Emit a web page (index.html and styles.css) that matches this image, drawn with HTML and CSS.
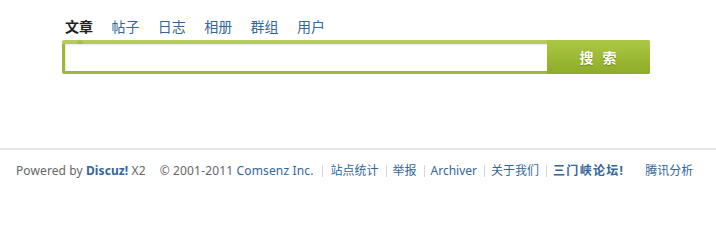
FILE: index.html
```html
<!DOCTYPE html>
<html>
<head>
<meta charset="utf-8">
<link rel="stylesheet" href="styles.css">
</head>
<body>
<div class="search-wrap">
  <ul class="tabs">
    <li class="tab active">文章</li>
    <li class="tab">帖子</li>
    <li class="tab">日志</li>
    <li class="tab">相册</li>
    <li class="tab">群组</li>
    <li class="tab">用户</li>
  </ul>
  <div class="search-box">
    <div class="input"></div>
    <div class="btn">搜 索</div>
  </div>
</div>
<div class="footer">
  <span class="grey">Powered by <b class="dz">Discuz!</b> X2</span>
  <span class="copy">© 2001-2011 <span class="link">Comsenz Inc.</span></span>
  <i class="sep first"></i><span class="link">站点统计</span>
  <i class="sep"></i><span class="link">举报</span>
  <i class="sep"></i><span class="link">Archiver</span>
  <i class="sep"></i><span class="link">关于我们</span>
  <i class="sep"></i><b class="link strong">三门峡论坛!</b>
  <span class="link last">腾讯分析</span>
</div>
</body>
</html>
```

FILE: styles.css
```css
html, body {
  margin: 0;
  padding: 0;
  background: #fff;
  font-family: "Noto Sans", "Noto Sans CJK SC", sans-serif;
  font-size: 12px;
  color: #333;
}
.search-wrap {
  margin-left: 62px;
  width: 588px;
  padding-top: 16px;
  height: 132px;
}
.tabs {
  list-style: none;
  margin: 0;
  padding: 0 0 0 3px;
  display: flex;
  gap: 18.4px;
  height: 24px;
}
.tab {
  font-family: "Noto Sans CJK SC", sans-serif;
  font-size: 14px;
  line-height: 20px;
  color: #336699;
  position: relative;
}
.tab.active {
  color: #222;
  font-weight: bold;
}
.tab.active::after {
  content: "";
  position: absolute;
  left: 11px;
  bottom: -4px;
  border-left: 4px solid transparent;
  border-right: 4px solid transparent;
  border-bottom: 4px solid #a3bf3b;
}
.search-box {
  display: flex;
  height: 34px;
  border-radius: 2px;
  background: #9db835;
  box-sizing: border-box;
  border-top: 4px solid #b6cc5a;
  padding: 0 0 3px 3px;
}
.input {
  flex: 1;
  background: #fff;
  box-shadow: inset 1px 1px 2px #e6e6e6;
}
.btn {
  width: 103px;
  margin-top: -4px;
  margin-bottom: -3px;
  border-radius: 0 2px 2px 0;
  background: linear-gradient(#acc843, #8eab29);
  color: #fff;
  font-family: "Noto Sans CJK SC", sans-serif;
  font-size: 14px;
  font-weight: bold;
  display: flex;
  align-items: center;
  justify-content: center;
  text-shadow: 0 1px 1px #6c8520;
  letter-spacing: 3px;
  white-space: pre;
  padding-left: 2px;
  box-sizing: border-box;
}
.footer {
  border-top: 2px solid #e5e5e5;
  display: flex;
  align-items: center;
  padding: 11px 0 0 16px;
  line-height: 20px;
  white-space: nowrap;
}
.grey { color: #666; letter-spacing: 0.1px; }
.dz { color: #336699; }
.copy { color: #666; margin-left: 14px; letter-spacing: 0.15px; }
.link { color: #336699; }
.sep {
  display: inline-block;
  width: 1px;
  height: 12px;
  background: #d6d6d6;
  margin: 0 6px 0 7px;
}
.sep.first { margin-left: 8px; margin-right: 8px; }
.strong { font-weight: bold; letter-spacing: 1.3px; }
.last { margin-left: 21px; }
```
